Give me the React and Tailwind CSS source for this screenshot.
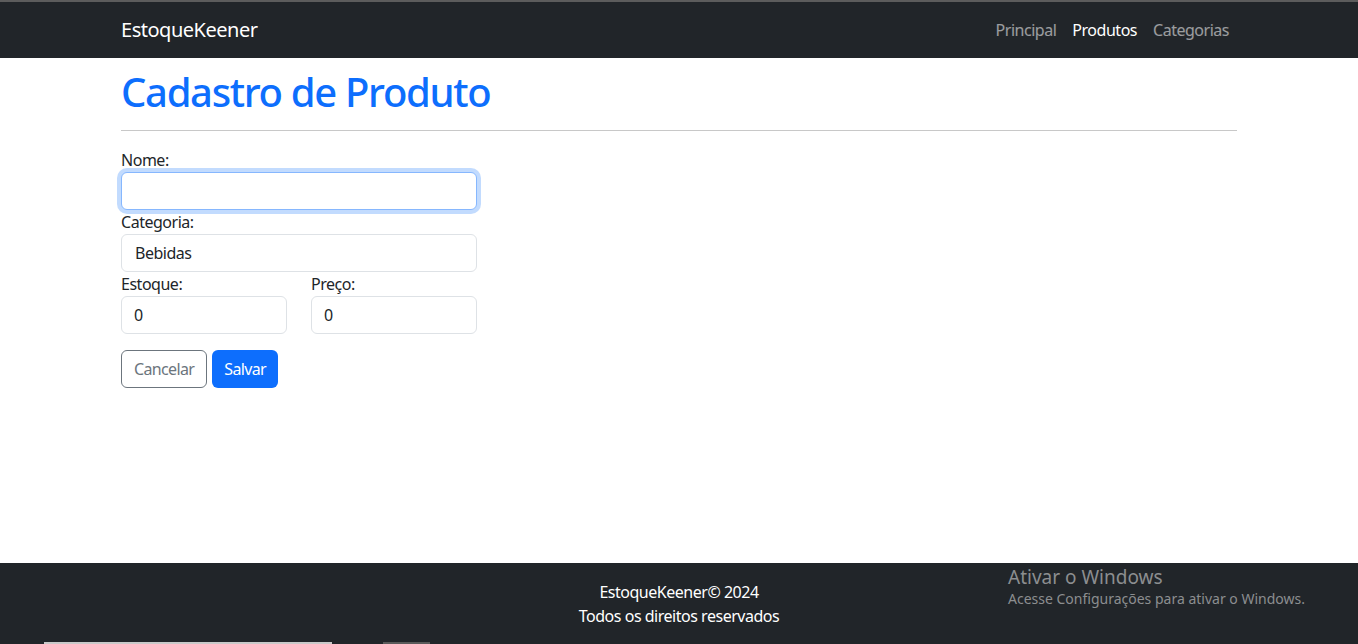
import React, {useState} from "react";

const font = {fontFamily: '"Noto Sans", "Open Sans", sans-serif'};

function Navbar(){
  const links = [
    {label: 'Principal', active: false},
    {label: 'Produtos', active: true},
    {label: 'Categorias', active: false},
  ];
  return (
    <nav className="bg-[#212529] border-t-2 border-[#5c5c5c]">
      <div className="w-[1116px] mx-auto h-[56px] flex items-center justify-between">
        <a className="text-white text-[20px] leading-[30px]">EstoqueKeener</a>
        <ul className="flex">
          {links.map((l)=>(
            <li key={l.label}>
              <a className={"block px-2 py-2 text-[16px] leading-6 " + (l.active ? "text-white" : "text-white/55")}>{l.label}</a>
            </li>
          ))}
        </ul>
      </div>
    </nav>
  );
}

function ProductForm(){
  const [nome, setNome] = useState('');
  const [estoque, setEstoque] = useState('0');
  const [preco, setPreco] = useState('0');
  const input = "w-full h-[38px] border border-[#dee2e6] rounded-[6px] px-3 text-[16px] text-[#212529] bg-white outline-none tracking-[-0.03em]";
  return (
    <form className="w-[356px] text-[#212529]" onSubmit={(e)=>e.preventDefault()}>
      <label className="block text-[16px] leading-6 mt-[-2px]">Nome:</label>
      <input value={nome} onChange={(e)=>setNome(e.target.value)} className="w-full h-[38px] border border-[#86b7fe] rounded-[6px] px-3 text-[16px] bg-white outline-none shadow-[0_0_0_4px_rgba(13,110,253,0.25)]" />
      <label className="block text-[16px] leading-6">Categoria:</label>
      <div className={input + " flex items-center pl-[13px]"}>Bebidas</div>
      <div className="grid grid-cols-2 gap-6">
        <div>
          <label className="block text-[16px] leading-6">Estoque:</label>
          <input value={estoque} onChange={(e)=>setEstoque(e.target.value)} className={input} />
        </div>
        <div>
          <label className="block text-[16px] leading-6">Preço:</label>
          <input value={preco} onChange={(e)=>setPreco(e.target.value)} className={input} />
        </div>
      </div>
      <div className="flex gap-[5px] mt-4">
        <button type="button" className="h-[38px] px-3 border border-[#6c757d] text-[#6c757d] rounded-[6px] text-[16px] tracking-[-0.04em]">Cancelar</button>
        <button type="submit" className="h-[38px] px-3 bg-[#0d6efd] text-white rounded-[6px] text-[16px] tracking-[-0.04em]">Salvar</button>
      </div>
    </form>
  );
}

export default function App(){
  return (
    <div className="min-h-screen flex flex-col bg-white tracking-[-0.03em]" style={font}>
      <Navbar />
      <main className="flex-1">
        <div className="w-[1116px] mx-auto">
          <h1 className="text-[40px] leading-[48px] text-[#0d6efd] font-medium mt-[10px] tracking-[-0.033em]">Cadastro de Produto</h1>
          <hr className="mt-[14px] mb-[19px] border-t border-[#c8c8c8]" />
          <ProductForm />
        </div>
      </main>
      <footer className="relative bg-[#212529] h-[81px] flex flex-col items-center justify-center text-white text-[16px] leading-6">
        <div>EstoqueKeener© 2024</div>
        <div>Todos os direitos reservados</div>
        <div className="absolute left-[1008px] top-[3px] text-[#8c8e90] tracking-normal">
          <div className="text-[19px] leading-[22px]">Ativar o Windows</div>
          <div className="text-[14px] leading-[22px]">Acesse Configurações para ativar o Windows.</div>
        </div>
        <div className="absolute left-[44px] bottom-0 w-[288px] h-[2px] bg-[#c9c9c9]"></div>
        <div className="absolute left-[383px] bottom-0 w-[47px] h-[2px] bg-[#5a5a5a]"></div>
      </footer>
    </div>
  );
}
